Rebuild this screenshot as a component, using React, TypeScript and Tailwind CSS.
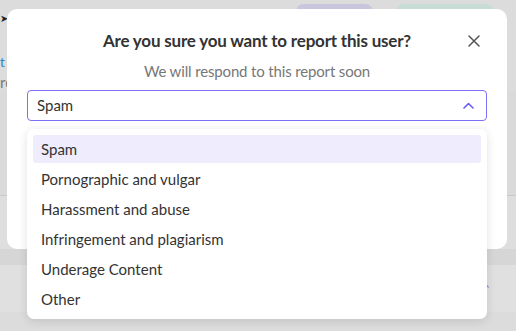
const reasons = [
  "Spam",
  "Pornographic and vulgar",
  "Harassment and abuse",
  "Infringement and plagiarism",
  "Underage Content",
  "Other",
];

function CloseIcon() {
  return (
    <svg width="12" height="12" viewBox="0 0 12 12" fill="none">
      <path d="M1 1L11 11M11 1L1 11" stroke="#555" strokeWidth="1.5" strokeLinecap="round" />
    </svg>
  );
}

function ChevronUp() {
  return (
    <svg width="11" height="7" viewBox="0 0 11 7" fill="none">
      <path d="M1 6L5.5 1.5L10 6" stroke="#6b5cf6" strokeWidth="1.6" strokeLinecap="round" strokeLinejoin="round" />
    </svg>
  );
}

export default function App() {
  return (
    <div
      className="relative w-[516px] h-[331px] overflow-hidden bg-[#dcdcdc]"
      style={{ fontFamily: 'Lato, "Noto Sans", sans-serif' }}
    >
      {/* dimmed page behind the dialog */}
      <div className="flex flex-col">
        <div className="flex h-[8px] items-start pl-[296px] gap-[23px] pt-[4px]">
          <div className="w-[77px] h-[16px] rounded-full bg-[#c9c5dd]" />
          <div className="w-[98px] h-[16px] rounded-full bg-[#c6dcd4]" />
        </div>
        <div className="h-[44px] text-[10px] leading-[20px] text-[#222]">➤</div>
        <div className="h-[20px] text-[13px] leading-[20px] text-[#2a7fd0]">t</div>
        <div className="h-[20px] text-[15px] leading-[20px] text-[#777]">re</div>
        <div className="h-[103px] bg-[#dadada]" />
        <div className="h-[54px] bg-[#dedede] border-t border-[#c8c8c8]" />
        <div className="h-[16px] bg-[#d6d6d6]" />
        <div className="h-[47px] bg-[#e0e0e0] flex justify-end pr-[26px] items-center">
          <span className="text-[#6b5cf6] text-[12px]">↑</span>
        </div>
        <div className="flex-1 bg-[#d8d8d8]" />
      </div>

      {/* dialog */}
      <div className="absolute left-[7px] top-[9px] w-[500px] h-[240px] rounded-[10px] bg-white">
        <div className="relative flex flex-col items-center pt-[20px] px-[20px]">
          <h2 className="text-[17px] leading-[24px] font-bold tracking-[-0.2px] text-[#333]">
            Are you sure you want to report this user?
          </h2>
          <button className="absolute right-[27px] top-[26px]">
            <CloseIcon />
          </button>
          <p className="mt-[8px] text-[15px] leading-[20px] tracking-[-0.15px] text-[#777]">
            We will respond to this report soon
          </p>
          <div className="mt-[9px] w-full h-[31px] rounded-[4px] border-[1.5px] border-[#7d70f6] flex items-center justify-between pl-[9px] pr-[12px]">
            <span className="text-[15px] text-[#333]">Spam</span>
            <ChevronUp />
          </div>
        </div>
      </div>

      {/* dropdown menu */}
      <div className="absolute left-[27px] top-[129px] w-[460px] rounded-[7px] bg-white p-[6px] flex flex-col gap-[2px] shadow-[0_2px_10px_rgba(0,0,0,0.12)]">
        {reasons.map((r, i) => (
          <div
            key={r}
            className={
              "h-[28px] flex items-center px-[8px] rounded-[3px] text-[15px] text-[#333] " +
              (i === 0 ? "bg-[#efecfd]" : "")
            }
          >
            {r}
          </div>
        ))}
      </div>
    </div>
  );
}
